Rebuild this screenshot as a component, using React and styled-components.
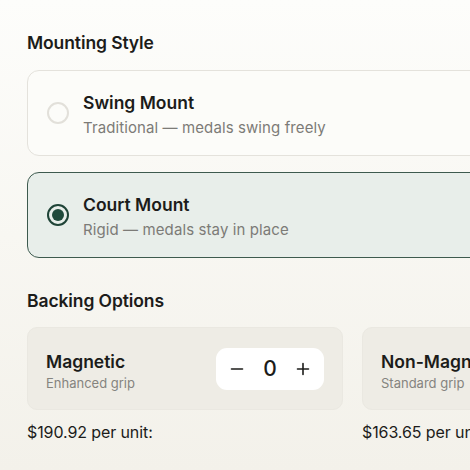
import React, { useState } from "react";
import styled, { createGlobalStyle } from "styled-components";

const Global = createGlobalStyle`
  html, body { margin: 0; padding: 0; }
  body {
    width: 470px; height: 470px; overflow: hidden;
    background: linear-gradient(180deg, #fdfdfb 0%, #f8f7f2 50%, #f3f1ea 100%);
    font-family: "Inter", "Noto Sans", sans-serif;
    color: #1c1c1a;
  }
`;

const Page = styled.div`
  width: 720px;
  padding: 32px 0 0 27px;
  box-sizing: border-box;
  display: flex;
  flex-direction: column;
`;

const SectionTitle = styled.h2`
  margin: 0 0 ${p => p.$mb || 14}px 0;
  font-size: 17.5px;
  font-weight: 600;
  letter-spacing: -0.1px;
  line-height: 22px;
  color: #1c1c1a;
`;

const OptionList = styled.div`
  display: flex;
  flex-direction: column;
  gap: 16px;
  margin-bottom: 32px;
`;

const OptionCard = styled.div`
  display: flex;
  align-items: center;
  gap: 14px;
  height: 86px;
  box-sizing: border-box;
  padding: 0 19px;
  border-radius: 12px;
  border: 1px solid ${p => (p.$selected ? "#3d5a4e" : "#e4e2dc")};
  background: ${p => (p.$selected ? "#e8eeea" : "#fcfcf9")};
`;

const Radio = styled.span`
  width: 22px;
  height: 22px;
  box-sizing: border-box;
  border-radius: 50%;
  border: 2px solid ${p => (p.$on ? "#1f4437" : "#e2e0da")};
  display: flex;
  align-items: center;
  justify-content: center;
  flex-shrink: 0;
  &::after {
    content: "";
    display: ${p => (p.$on ? "block" : "none")};
    width: 12px;
    height: 12px;
    border-radius: 50%;
    background: #1f4a3b;
  }
`;

const OptionText = styled.div`
  display: flex;
  flex-direction: column;
  gap: 4px;
  margin-top: 4px;
`;

const OptionName = styled.div`
  font-size: 17.5px;
  font-weight: 600;
  letter-spacing: 0;
  line-height: 22px;
`;

const OptionDesc = styled.div`
  font-size: 15px;
  color: #7c7b77;
  letter-spacing: 0.1px;
  line-height: 20px;
`;

const BackingRow = styled.div`
  display: flex;
  gap: 19px;
`;

const BackingCol = styled.div`
  display: flex;
  flex-direction: column;
  gap: 12px;
  width: 316px;
`;

const BackingCard = styled.div`
  display: flex;
  align-items: center;
  justify-content: space-between;
  height: 83px;
  box-sizing: border-box;
  padding: 0 18px;
  border-radius: 10px;
  border: 1px solid #eae8e1;
  background: #eeece5;
`;

const BackingText = styled.div`
  display: flex;
  flex-direction: column;
  gap: 3px;
  margin-top: 6px;
`;

const BackingName = styled.div`
  font-size: 17.5px;
  font-weight: 600;
  letter-spacing: 0;
  line-height: 21px;
`;

const BackingDesc = styled.div`
  font-size: 13px;
  color: #85847f;
  letter-spacing: 0;
  line-height: 17px;
`;

const Stepper = styled.div`
  display: flex;
  align-items: center;
  justify-content: space-between;
  width: 108px;
  height: 42px;
  box-sizing: border-box;
  padding: 0 11px;
  border-radius: 11px;
  background: #ffffff;
`;

const StepBtn = styled.button`
  border: 0;
  background: transparent;
  padding: 0;
  width: 20px;
  height: 20px;
  display: flex;
  align-items: center;
  justify-content: center;
  color: #1c1c1a;
  cursor: pointer;
`;

const Count = styled.span`
  font-size: 21px;
  font-weight: 500;
  line-height: 24px;
`;

const Price = styled.div`
  font-size: 16px;
  letter-spacing: -0.1px;
  line-height: 20px;
  color: #1c1c1a;
`;

const Minus = () => (
  <svg width="16" height="16" viewBox="0 0 16 16" fill="none" stroke="currentColor" strokeWidth="1.6" strokeLinecap="round">
    <path d="M2.5 8h11" />
  </svg>
);
const Plus = () => (
  <svg width="16" height="16" viewBox="0 0 16 16" fill="none" stroke="currentColor" strokeWidth="1.6" strokeLinecap="round">
    <path d="M2.5 8h11M8 2.5v11" />
  </svg>
);

const mounts = [
  { id: "swing", name: "Swing Mount", desc: "Traditional — medals swing freely" },
  { id: "court", name: "Court Mount", desc: "Rigid — medals stay in place" },
];

const backings = [
  { id: "mag", name: "Magnetic", desc: "Enhanced grip", price: "$190.92 per unit:" },
  { id: "non", name: "Non-Magnetic", desc: "Standard grip", price: "$163.65 per unit:" },
];

export default function App() {
  const [mount, setMount] = useState("court");
  const [qty, setQty] = useState({ mag: 0, non: 0 });
  return (
    <>
      <Global />
      <Page>
        <SectionTitle $mb={16}>Mounting Style</SectionTitle>
        <OptionList>
          {mounts.map(m => (
            <OptionCard key={m.id} $selected={mount === m.id} onClick={() => setMount(m.id)}>
              <Radio $on={mount === m.id} />
              <OptionText>
                <OptionName>{m.name}</OptionName>
                <OptionDesc>{m.desc}</OptionDesc>
              </OptionText>
            </OptionCard>
          ))}
        </OptionList>
        <SectionTitle $mb={15}>Backing Options</SectionTitle>
        <BackingRow>
          {backings.map(b => (
            <BackingCol key={b.id}>
              <BackingCard>
                <BackingText>
                  <BackingName>{b.name}</BackingName>
                  <BackingDesc>{b.desc}</BackingDesc>
                </BackingText>
                <Stepper>
                  <StepBtn onClick={() => setQty(q => ({ ...q, [b.id]: Math.max(0, q[b.id] - 1) }))}><Minus /></StepBtn>
                  <Count>{qty[b.id]}</Count>
                  <StepBtn onClick={() => setQty(q => ({ ...q, [b.id]: q[b.id] + 1 }))}><Plus /></StepBtn>
                </Stepper>
              </BackingCard>
              <Price>{b.price}</Price>
            </BackingCol>
          ))}
        </BackingRow>
      </Page>
    </>
  );
}
